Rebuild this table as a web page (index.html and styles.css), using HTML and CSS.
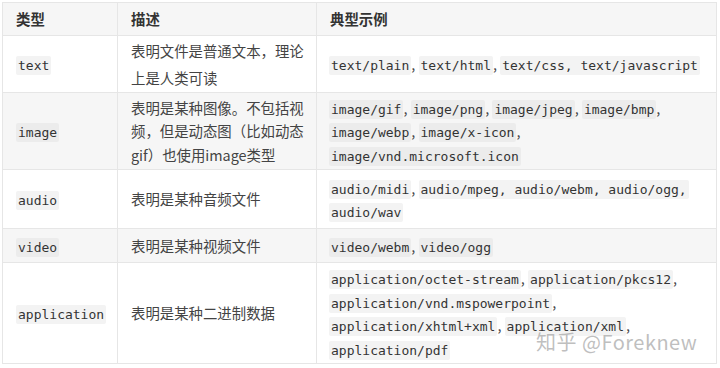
FILE: index.html
```html
<!DOCTYPE html>
<html lang="zh-CN">
<head>
    <meta charset="UTF-8">
    <meta name="viewport" content="width=device-width, initial-scale=1.0">
    <title>MIME 类型</title>
    <link rel="stylesheet" href="styles.css">
</head>
<body>

    <div class="wrap">
        <table class="mime-table">
            <colgroup>
                <col class="col-type">
                <col class="col-desc">
                <col class="col-example">
            </colgroup>
            <thead>
                <tr class="row-head">
                    <th>类型</th>
                    <th>描述</th>
                    <th>典型示例</th>
                </tr>
            </thead>
            <tbody>
                <tr class="row-text">
                    <td><code>text</code></td>
                    <td>表明文件是普通文本，理论上是人类可读</td>
                    <td><code>text/plain</code>, <code>text/html</code>, <code>text/css, text/javascript</code></td>
                </tr>
                <tr class="row-image">
                    <td><code>image</code></td>
                    <td>表明是某种图像。不包括视频，但是动态图（比如动态gif）也使用image类型</td>
                    <td><code>image/gif</code>, <code>image/png</code>, <code>image/jpeg</code>, <code>image/bmp</code>, <code>image/webp</code>, <code>image/x-icon</code>, <code>image/vnd.microsoft.icon</code></td>
                </tr>
                <tr class="row-audio">
                    <td><code>audio</code></td>
                    <td>表明是某种音频文件</td>
                    <td><code>audio/midi</code>, <code>audio/mpeg, audio/webm, audio/ogg,</code> <code>audio/wav</code></td>
                </tr>
                <tr class="row-video">
                    <td><code>video</code></td>
                    <td>表明是某种视频文件</td>
                    <td><code>video/webm</code>, <code>video/ogg</code></td>
                </tr>
                <tr class="row-app">
                    <td><code>application</code></td>
                    <td>表明是某种二进制数据</td>
                    <td><code>application/octet-stream</code>, <code>application/pkcs12</code>, <code>application/vnd.mspowerpoint</code>, <code>application/xhtml+xml</code>, <code>application/xml</code>, <code>application/pdf</code></td>
                </tr>
            </tbody>
        </table>

        <!-- site watermark -->
        <div class="watermark">知乎 @Foreknew</div>
    </div>

</body>
</html>
```

FILE: styles.css
```css
body {
    margin: 0;
    background-color: #fff;
    font-family: "Noto Sans CJK SC", "Noto Sans", sans-serif;
    color: #444;
}
.wrap {
    position: relative;
    padding: 2px 0 0 2px;
}
.mime-table {
    border-collapse: collapse;
    table-layout: fixed;
    width: 714px;
    font-size: 14.4px;
    line-height: 23.5px;
}
.col-type {
    width: 115px;
}
.col-desc {
    width: 199px;
}
.col-example {
    width: 400px;
}
.mime-table th,
.mime-table td {
    border: 1px solid #e6e6e6;
    padding: 0 11px 0 13px;
    text-align: left;
    vertical-align: middle;
}
.mime-table th {
    font-weight: bold;
    color: #333;
}
.mime-table td:last-child {
    padding: 0 16px 0 12px;
}
.row-head {
    height: 33px;
    background-color: #f6f6f6;
}
.row-text {
    height: 57px;
}
.row-image {
    height: 77px;
    background-color: #f6f6f6;
}
.row-audio {
    height: 59px;
}
.row-video {
    height: 34px;
    background-color: #f6f6f6;
}
.row-app {
    height: 101px;
}
.row-text td:nth-child(2) {
    line-height: 27px;
}
code {
    font-family: "DejaVu Sans Mono", "Liberation Mono", monospace;
    font-size: 13px;
    line-height: 1;
    color: #333;
    background-color: #f3f3f3;
    padding: 2px 2px;
    border-radius: 2px;
}
.row-image code,
.row-video code {
    background-color: #ececec;
}
.watermark {
    position: absolute;
    left: 536px;
    top: 327px;
    font-size: 20px;
    color: rgba(170, 170, 170, 0.75);
    letter-spacing: 0.5px;
}
```
